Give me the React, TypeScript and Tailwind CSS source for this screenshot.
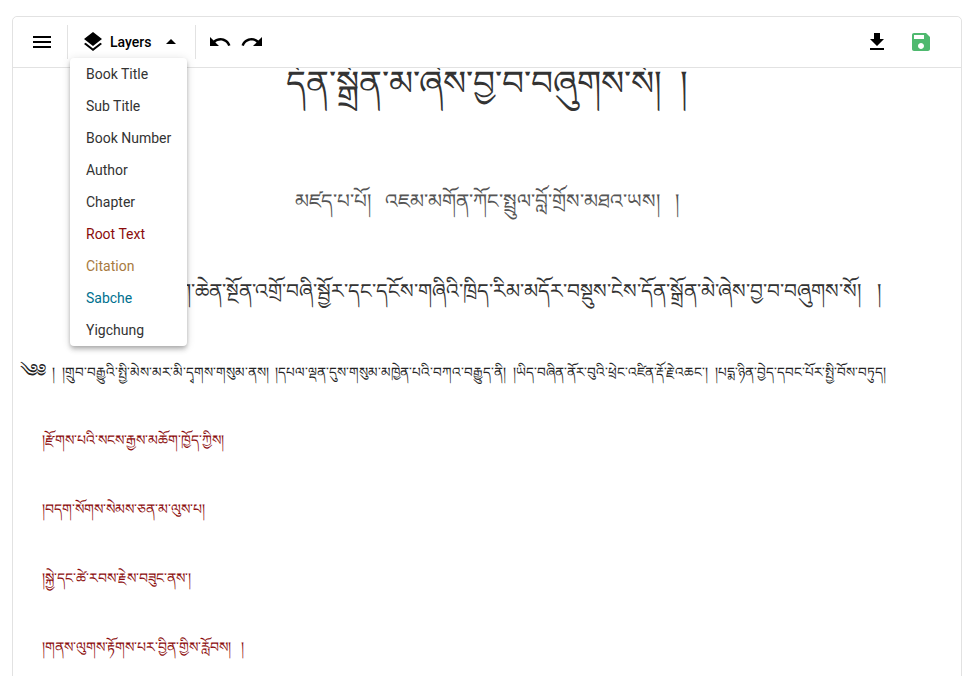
const P = ({ d, c = "#000", s = 24 }: { d: string; c?: string; s?: number }) => (
  <svg width={s} height={s} viewBox="0 0 24 24" fill={c} className="block shrink-0"><path d={d} /></svg>
);

const items: [string, string][] = [
  ["Book Title", "text-[#333333]"],
  ["Sub Title", "text-[#333333]"],
  ["Book Number", "text-[#333333]"],
  ["Author", "text-[#333333]"],
  ["Chapter", "text-[#333333]"],
  ["Root Text", "text-[#8b0c0c]"],
  ["Citation", "text-[#a87a3e]"],
  ["Sabche", "text-[#00718f]"],
  ["Yigchung", "text-[#333333]"],
];

const G = "\u00a0\u00a0\u00a0";
const S = "\u00a0\u00a0";

const verses = [
  "།རྫོགས་པའི་སངས་རྒྱས་མཆོག་ཁྱོད་ཀྱིས།",
  "།བདག་སོགས་སེམས་ཅན་མ་ལུས་པ།",
  "།སྐྱེ་དང་ཚེ་རབས་རྗེས་བཟུང་ནས་།",
  `།གནས་ལུགས་རྟོགས་པར་བྱིན་གྱིས་རློབས།${G}།`,
];

export default function App() {
  return (
    <div className="h-[676px] overflow-hidden bg-white pt-4 px-3 font-['Roboto','Noto_Sans',sans-serif]">
      <div className="relative h-[700px] w-[950px] rounded-[5px] border border-[#e2e2e2]">
        <div className="relative z-10 flex h-[51px] items-center rounded-t-[5px] border-b border-[#e2e2e2] bg-white pl-[17px] pr-[28px]">
          <P d="M3 18h18v-2H3v2zm0-5h18v-2H3v2zm0-7v2h18V6H3z" />
          <div className="ml-[13px] h-[34px] w-px bg-[#e2e2e2]" />
          <div className="ml-[13px] flex items-center">
            <P d="M11.99 18.54l-7.37-5.73L3 14.07l9 7 9-7-1.63-1.27-7.38 5.74zM12 16l7.36-5.73L21 9l-9-7-9 7 1.63 1.27L12 16z" />
            <span className="ml-[5px] text-[14px] font-medium text-black">Layers</span>
            <span className="ml-[8px]"><P d="M7 14l5-5 5 5z" /></span>
          </div>
          <div className="ml-[12px] h-[34px] w-px bg-[#e2e2e2]" />
          <div className="ml-[12px]"><P d="M12.5 8c-2.65 0-5.05.99-6.9 2.6L2 7v9h9l-3.62-3.62c1.39-1.16 3.16-1.88 5.12-1.88 3.54 0 6.55 2.31 7.6 5.5l2.37-.78C21.08 11.03 17.15 8 12.5 8z" /></div>
          <div className="ml-[8px]"><P d="M18.4 10.6C16.55 8.99 14.15 8 11.5 8c-4.65 0-8.58 3.03-9.96 7.22L3.9 16c1.05-3.19 4.05-5.5 7.6-5.5 1.95 0 3.73.72 5.12 1.88L13 16h9V7l-3.6 3.6z" /></div>
          <div className="ml-auto"><P d="M19 9h-4V3H9v6H5l7 7 7-7zM5 18v2h14v-2H5z" /></div>
          <div className="ml-[20px]"><P c="#4fb96f" d="M17 3H5c-1.11 0-2 .9-2 2v14c0 1.1.89 2 2 2h14c1.1 0 2-.9 2-2V7l-4-4zm-5 16c-1.66 0-3-1.34-3-3s1.34-3 3-3 3 1.34 3 3-1.34 3-3 3zm3-10H5V5h10v4z" /></div>
        </div>

        <div className="-mt-[9px] flex flex-col text-[#333333]">
          <p className="whitespace-nowrap text-center text-[34.4px] leading-[48px]">{`དོན་སྒྲོན་མ་ཞེས་བྱ་བ་བཞུགས་སོ།${S}།`}</p>
          <p className="mt-[74px] whitespace-nowrap text-center text-[20px] leading-[40px] text-[#555555]">{`མཛད་པ་པོ།${G}འཇམ་མགོན་ཀོང་སྤྲུལ་བློ་གྲོས་མཐའ་ཡས།${G}།`}</p>
          <p className="mt-[50px] whitespace-nowrap pr-[16px] text-center text-[20.2px] leading-[40px]">{`བཀའ་བརྒྱུད་ཕྱག་ཆེན་སྔོན་འགྲོ་བཞི་སྦྱོར་དང་དངོས་གཞིའི་ཁྲིད་རིམ་མདོར་བསྡུས་ངེས་དོན་སྒྲོན་མེ་ཞེས་བྱ་བ་བཞུགས་སོ།${G}།`}</p>
          <p className="mt-[46px] whitespace-nowrap pl-[7px] text-[13.55px] leading-[30px] text-[#222222]">
            <span className="mr-[6px] text-[19px] leading-[20px]">༄༅</span>
            {`།${S}།གྲུབ་བརྒྱུའི་སྤྱི་མེས་མར་མི་དྭགས་གསུམ་ནས།${S}།དཔལ་ལྡན་དུས་གསུམ་མཁྱེན་པའི་བཀའ་བརྒྱུད་ནི།${S}།ཡིད་བཞིན་ནོར་བུའི་ཕྲེང་འཛིན་རྡོ་རྗེ་འཆང་།${S}།པདྨ་ཉིན་བྱེད་དབང་པོར་སྤྱི་བོས་བཏུད།`}
          </p>
          <div className="mt-[38px] flex flex-col gap-[39px] pl-[29px] text-[14px] leading-[30px] text-[#8b0c0c]">
            {verses.map((v) => <p key={v} className="whitespace-nowrap">{v}</p>)}
          </div>
        </div>

        <div className="absolute left-[57px] top-[41px] z-20 w-[117px] rounded bg-white shadow-[0_2px_4px_-1px_rgba(0,0,0,0.2),0_4px_5px_0_rgba(0,0,0,0.14),0_1px_10px_0_rgba(0,0,0,0.12)]">
          {items.map(([t, c]) => (
            <div key={t} className={`flex h-8 items-center whitespace-nowrap pl-4 text-[14px] ${c}`}>{t}</div>
          ))}
        </div>
      </div>
    </div>
  );
}
